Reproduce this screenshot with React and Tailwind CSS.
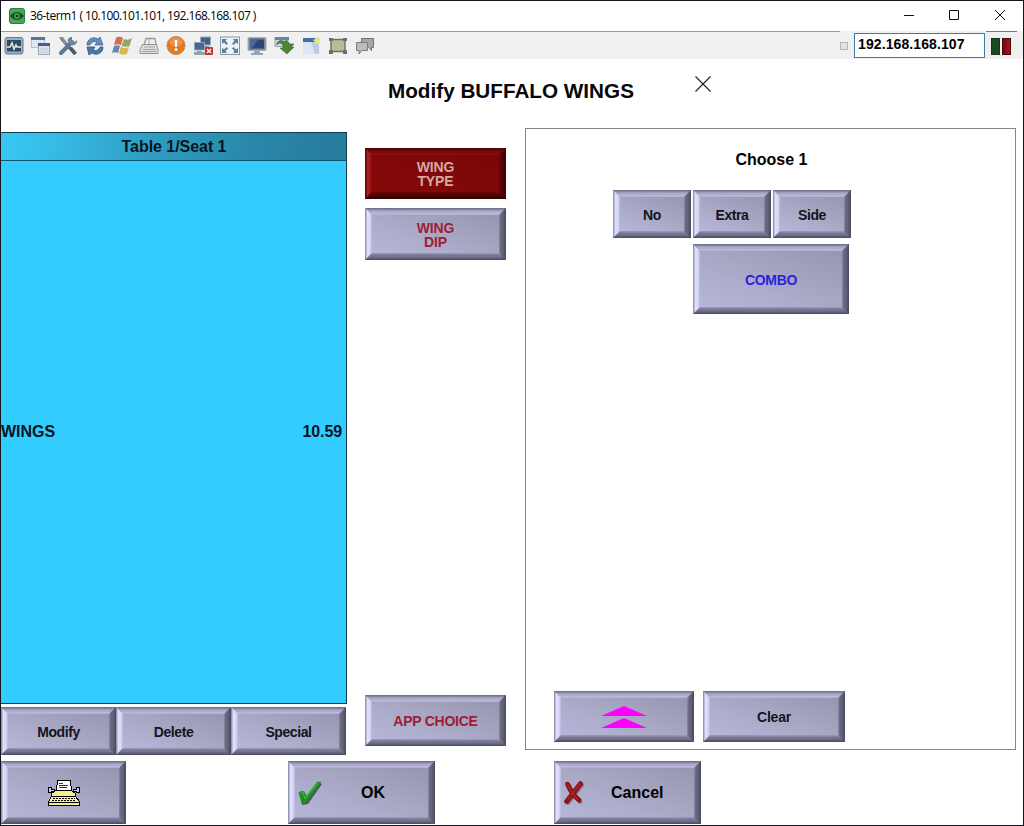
import React from "react";

const TONES = {
  steel: {
    layers: [
      "border border-t-[#72728a] border-l-[#9494b2] border-r-[#4e4e62] border-b-[#505064]",
      "border border-t-[#8686a2] border-l-[#bcbcdc] border-r-[#555569] border-b-[#5c5c74]",
      "border border-t-[#9a9aba] border-l-[#dedefa] border-r-[#5c5c72] border-b-[#686882]",
      "border-2 border-t-[#acaccc] border-l-[#dcdcf8] border-r-[#64647a] border-b-[#757590]",
      "border border-t-[#b8b8da] border-l-[#ccccec] border-r-[#6e6e86] border-b-[#8484a2]",
      "border border-t-[#b2b2d2] border-l-[#bebee0] border-r-[#80809a] border-b-[#9494b4]",
    ],
    face: "bg-linear-[20deg,#b6b6da_0%,#a8a8c5_50%,#9696b0_100%]",
  },
  red: {
    layers: [
      "border border-t-[#520303] border-l-[#6c0606] border-r-[#3a0202] border-b-[#340202]",
      "border border-t-[#5e0505] border-l-[#860c0c] border-r-[#420303] border-b-[#3c0303]",
      "border border-t-[#6c0606] border-l-[#a82020] border-r-[#4a0303] border-b-[#440303]",
      "border-2 border-t-[#7a0909] border-l-[#a41c1c] border-r-[#520404] border-b-[#4e0404]",
      "border border-t-[#8a0d0d] border-l-[#961212] border-r-[#5c0505] border-b-[#5c0505]",
      "border border-t-[#880b0b] border-l-[#8c0c0c] border-r-[#6a0606] border-b-[#6c0606]",
    ],
    face: "bg-linear-[20deg,#860909_0%,#800808_50%,#780707_100%]",
  },
};

function Key({ size, tone = "steel", children }) {
  const t = TONES[tone];
  const face = (
    <span className={`flex h-full w-full items-center justify-center whitespace-nowrap ${t.face}`}>{children}</span>
  );
  const [rim, ...inner] = t.layers;
  const body = inner.reduceRight(
    (child, layer) => <span className={`flex h-full w-full ${layer}`}>{child}</span>,
    face
  );
  return <button className={`flex shrink-0 ${rim} ${size}`}>{body}</button>;
}

function Label({ className = "tracking-[-0.4px]", children }) {
  return <span className={`pt-px text-center text-[14px] leading-[14px] font-bold ${className}`}>{children}</span>;
}

function Ico({ children }) {
  return (
    <svg width="20" height="20" viewBox="0 0 20 20" className="shrink-0">
      {children}
    </svg>
  );
}

function Toolbar() {
  return (
    <div className="flex items-center gap-[7px] pt-px pl-[3px]">
      <Ico>
        <rect x="1" y="1.500" width="18" height="16.500" rx="2" fill="#9fb0bf" stroke="#66798a" />
        <rect x="3" y="4" width="14" height="11.500" fill="#2a4d6e" />
        <path d="M3 11h3l2-4 2 6 2-4 1 2h4" fill="none" stroke="#eef1dc" strokeWidth="1.500" />
      </Ico>
      <Ico>
        <rect x="0.5" y="1.500" width="13" height="10" fill="#e1e6ed" stroke="#b5c0ca" />
        <path d="M0 1h14v3H0z" fill="#54759f" />
        <rect x="7.500" y="7.500" width="11" height="11" fill="#dce2ea" stroke="#98a5b2" />
        <path d="M7 7h12v3H7z" fill="#3d6194" />
        <path d="M9 13h8M9 16h8" stroke="#bcc7d2" />
      </Ico>
      <Ico>
        <path d="M3 2l6 7 8 9" stroke="#59636e" strokeWidth="3" fill="none" />
        <path d="M14 6L3 17" stroke="#5d7893" strokeWidth="4" strokeLinecap="round" />
        <path d="M14 1l0 4 3 1 2-2c1 3-2 6-6 5l-3-3c-1-3 1-5 4-5z" fill="#6d849c" />
        <path d="M1 1l4 0 4 6-2 2z" fill="#858d95" />
        <path d="M11 12l3-1 5 6-3 2z" fill="#4a5765" />
      </Ico>
      <Ico>
        <path d="M2 9C2 3 8 0 13 3l2-2 3 8h-8l2-3C9 5 6 6 5 9z" fill="#6390bb" stroke="#3c6791" strokeWidth=".8" />
        <path d="M18 11c0 6-6 9-11 6l-3 2-2-8h8l-2 3c3 1 6 0 7-3z" fill="#4a78a8" stroke="#2f5680" strokeWidth=".8" />
      </Ico>
      <Ico>
        <path d="M4 2c2-2 5-1 7 0L9 9C6 8 4 8 2 9z" fill="#cf6f4e" />
        <path d="M12 3c3 1 5 1 8-1l-2.500 8c-3 1-5 1-8 0z" fill="#8bab62" />
        <path d="M2 10c2-1 4-1 6 0l-2 7c-2-1-4-1-6 0z" fill="#6585b5" />
        <path d="M9 10.500c3 2 5 2 8 0l-2 7.500c-3 1-6 1-8-1z" fill="#dab650" />
      </Ico>
      <Ico>
        <path d="M5 9l2-6.500h9l1 6" fill="#ececec" stroke="#9a9a9a" strokeWidth="1.300" />
        <path d="M10 3v5" stroke="#aaa" />
        <path d="M3.500 8.500h14l1.500 5v4H1v-4z" fill="#dedede" stroke="#929292" />
        <path d="M5 11h11M4 13.500h13M3 15.500h14" stroke="#a6a6a6" />
      </Ico>
      <Ico>
        <circle cx="10" cy="9.500" r="9.200" fill="#e27a24" stroke="#c09873" strokeWidth=".8" />
        <ellipse cx="10" cy="6" rx="6.500" ry="4.500" fill="#f0a05c" opacity=".6" />
        <path d="M8.600 4h2.800l-.5 7H9.100z" fill="#fff" />
        <circle cx="10" cy="13.500" r="1.500" fill="#fff" />
      </Ico>
      <Ico>
        <rect x="7.500" y="1" width="10" height="8" fill="#40618c" stroke="#9eabb7" />
        <path d="M10 10h6v2h-6z" fill="#8897a5" />
        <rect x="1.500" y="6.500" width="10" height="7.500" fill="#45689a" stroke="#97a4b1" />
        <path d="M4 15h5v1h4v3H1v-3h3z" fill="#96a2ad" />
        <rect x="12" y="11" width="8" height="8" rx="1" fill="#c5302c" />
        <path d="M14 13l4 4m0-4l-4 4" stroke="#fff" strokeWidth="1.400" />
      </Ico>
      <Ico>
        <rect x=".5" y="1" width="19" height="17.500" fill="#eef2f4" stroke="#8497a4" />
        <path d="M2 3h5L5.500 5 8 7.500 6.500 9 4 6.500 2 8zM18 3h-5l1.500 2L12 7.500 13.500 9 16 6.500 18 8zM2 17h5l-1.500-2L8 12.500 6.500 11 4 13.500 2 12zM18 17h-5l1.500-2-2.500-2.500 1.500-1.500 2.500 2.500 2-1.500z" fill="#5d7c96" />
      </Ico>
      <Ico>
        <rect x="1" y="1.500" width="18" height="13" rx="1" fill="#7f8894" stroke="#a7afb5" />
        <rect x="3" y="3.500" width="14" height="9" fill="#2b457a" />
        <path d="M3 3.500h8l-6 9H3z" fill="#4e6792" />
        <path d="M7 15h6v2h3v2H4v-2h3z" fill="#9ba3aa" />
      </Ico>
      <Ico>
        <rect x="1" y="1.500" width="13" height="9" fill="#cfd9e3" stroke="#94a3af" />
        <path d="M1 1h14v3H1z" fill="#6b83a3" />
        <path d="M3 7c2-3 5-3 8-1l1-2 4 4h4l-3 3h3l-7 7-7-6h3V9C7 7 5 6 3 9z" fill="#4b8538" stroke="#35662b" strokeWidth=".6" />
      </Ico>
      <Ico>
        <path d="M2 2h16v16H2z" fill="#b9cde2" />
        <path d="M2 2h13v4H2z" fill="#456da4" />
        <path d="M2 6h8l4 12H2z" fill="#dde7f1" />
        <path d="M16 0l1 3 3 0-2 2 2 3-4-1-2 2 0-3-2-2 2-1z" fill="#f0e47a" />
      </Ico>
      <Ico>
        <path d="M3 3.500h14v12H3z" fill="#b9bb98" stroke="#6d7061" strokeWidth="1.400" />
        <path d="M1 2h4v3H1zM15 2h4v3h-4zM1 14h4v4H1zM15 14h4v4h-4z" fill="#6c6e68" />
      </Ico>
      <Ico>
        <path d="M6.500 2.500h12v9h-2v3l-3-3h-7z" fill="#a6a6a6" stroke="#737373" />
        <path d="M1.500 6.500h11v8H7l-3 3.500v-3.500H1.500z" fill="#bcbcbc" stroke="#7b7b7b" />
      </Ico>
    </div>
  );
}

function TitleBar() {
  return (
    <div className="flex h-[30px] shrink-0 items-center bg-white pl-2">
      <svg width="16" height="16" viewBox="0 0 16 16" className="mb-px shrink-0">
        <rect x=".5" y=".5" width="15" height="15" rx="2" fill="#45a653" stroke="#2b8039" />
        <path d="M1 8q7-8 14 0-7 8-14 0z" fill="#1a4f25" />
        <circle cx="8" cy="8" r="2.700" fill="#4fae61" />
        <circle cx="8" cy="8" r="1.300" fill="#0d2412" />
      </svg>
      <span className="ml-[5px] font-['Open_Sans','Noto_Sans',sans-serif] text-[12px] tracking-[-0.57px] whitespace-nowrap text-black">
        36-term1 ( 10.100.101.101, 192.168.168.107 )
      </span>
      <svg width="102" height="12" viewBox="0 0 102 12" className="mr-[17px] mb-[2px] ml-auto shrink-0" fill="none" stroke="#111">
        <path d="M0 6.500h10M45.500 1.500h9v9h-9zM91 1l10 10M101 1L91 11" />
      </svg>
    </div>
  );
}

function Typewriter() {
  return (
    <svg width="34" height="28" viewBox="0 0 34 28" shapeRendering="crispEdges">
      <path d="M1.500 8.500h3v2h3v2h-3v1h-3zM32.500 8.500h-3v2h-3v2h3v1h3z" fill="#c8c8f0" stroke="#000" />
      <path d="M4.500 18.500v-4l4-3h16l4 3v4z" fill="#f3ee90" stroke="#000" />
      <path d="M10.500 1.500h13l1 10h-15z" fill="#fff" stroke="#000" />
      <path d="M12 4.500h4M12 6.500h9M12 8.500h8" stroke="#2525b5" />
      <path d="M4.500 17.500h24l4 5v4h-31v-4z" fill="#f3ee90" stroke="#000" />
      <path d="M6 19.500h22M5 21.500h24" stroke="#000" strokeDasharray="2 1" />
      <path d="M2 23.500h30" stroke="#000" />
    </svg>
  );
}

function OrderList() {
  return (
    <div className="flex w-[346px] shrink-0 flex-col pt-[4px]">
      <div className="flex h-[572px] flex-col border-t border-r border-b border-[#123c50] bg-[#33ccff] text-[16px] font-bold text-[#08141c]">
        <div className="flex h-[28px] shrink-0 items-center justify-center border-b border-[#12526a] bg-linear-[100deg,#38c8f5_0%,#36bce6_15%,#2f9cc0_45%,#2986a8_75%,#277a9a_100%]">
          <span className="pl-px tracking-[-0.05px]">Table 1/Seat 1</span>
        </div>
        <div className="flex flex-1 items-center justify-between pr-[4px]">
          <span>WINGS</span>
          <span className="tracking-[-0.1px]">10.59</span>
        </div>
      </div>
      <div className="mt-[3px] flex">
        <Key size="h-[48px] w-[115px]"><Label>Modify</Label></Key>
        <Key size="h-[48px] w-[115px]"><Label>Delete</Label></Key>
        <Key size="h-[48px] w-[115px]"><Label>Special</Label></Key>
      </div>
    </div>
  );
}

function ChoicePanel() {
  return (
    <div className="ml-[19px] flex h-[622px] w-[491px] shrink-0 flex-col border border-[#858585]">
      <div className="flex h-[61px] items-center justify-center pl-[2px] text-[16px] font-bold text-black">Choose 1</div>
      <div className="flex gap-[2px] pl-[87px]">
        <Key size="h-[48px] w-[78px]"><Label>No</Label></Key>
        <Key size="h-[48px] w-[78px]"><Label>Extra</Label></Key>
        <Key size="h-[48px] w-[78px]"><Label>Side</Label></Key>
      </div>
      <div className="mt-[6px] pl-[167px]">
        <Key size="h-[70px] w-[156px]">
          <Label className="tracking-[-0.35px] text-[#2a22e0]">COMBO</Label>
        </Key>
      </div>
      <div className="mt-auto mb-[7px] flex gap-[9px] pl-[28px]">
        <Key size="h-[51px] w-[140px]">
          <svg width="46" height="22" viewBox="0 0 46 22" fill="#ff00ff">
            <path d="M0 10L23 0l23 10zM0 22l23-10 23 10z" />
          </svg>
        </Key>
        <Key size="h-[51px] w-[142px]"><Label className="tracking-[-0.2px]">Clear</Label></Key>
      </div>
    </div>
  );
}

export default function App() {
  return (
    <div className="flex h-[826px] w-[1024px] flex-col overflow-hidden border border-[#15151c] bg-white font-['Liberation_Sans',Arial,sans-serif] text-[#14141c]">
      <TitleBar />
      <div className="flex h-[28px] shrink-0 bg-[#f0f0f0]">
        <div className="flex w-[839px] shrink-0 items-center border-t border-[#9a9a9a]">
          <Toolbar />
        </div>
        <div className="mt-[11px] h-[8px] w-[8px] shrink-0 border border-[#b5b5b5] bg-[#e2e2e2]" />
        <div className="mt-[2px] ml-[6px] flex h-[25px] w-[131px] shrink-0 items-center border border-[#3f7ba8] bg-white pb-[2px] pl-[3px] text-[14px] font-bold tracking-[0.1px] text-black">
          192.168.168.107
        </div>
        <div className="ml-px flex h-[28px] w-[31px] items-center gap-[2px] border-t border-[#777] pt-px pl-[5px]">
          <div className="h-[17px] w-[9px] border border-[#17351a] bg-[#1c4a20]" />
          <div className="h-[17px] w-[9px] border border-[#4a0a0d] bg-linear-to-r from-[#6a0a10] to-[#b01020]" />
        </div>
      </div>
      <div className="flex h-[69px] shrink-0 pl-[387px]">
        <h1 className="w-[307px] pt-[17px] text-[20.7px] leading-[30px] font-bold whitespace-nowrap text-[#080808]">
          Modify BUFFALO WINGS
        </h1>
        <svg width="16" height="16" viewBox="0 0 16 16" className="mt-[17px]" fill="none" stroke="#222" strokeWidth="1.200">
          <path d="M.5.500l15 15M15.500.500l-15 15" />
        </svg>
      </div>
      <div className="flex h-[627px] shrink-0">
        <OrderList />
        <div className="ml-[18px] flex h-[618px] w-[141px] shrink-0 flex-col gap-[9px] pt-[20px]">
          <Key tone="red" size="h-[51px] w-[141px]">
            <Label className="tracking-[-0.1px] text-[#d3a9a4]">WING<br />TYPE</Label>
          </Key>
          <Key size="h-[52px] w-[141px]">
            <Label className="tracking-[-0.1px] text-[#a01c36]">WING<br />DIP</Label>
          </Key>
          <div className="mt-auto">
            <Key size="h-[51px] w-[141px]">
              <Label className="tracking-[-0.25px] text-[#a01c36]">APP CHOICE</Label>
            </Key>
          </div>
        </div>
        <ChoicePanel />
      </div>
      <div className="flex pt-[6px] text-[16px] font-bold text-black">
        <Key size="h-[63px] w-[125px]"><Typewriter /></Key>
        <div className="ml-[162px]">
          <Key size="h-[63px] w-[147px]">
            <span className="flex w-full items-center pl-[2px]">
              <svg width="26" height="26" viewBox="0 0 26 26">
                <path d="M3 14l5-1 2 4L22 3l3 1-14 20-6 1z" fill="#55506e" />
                <path d="M1.500 12.500q3-2.500 6-1l1.500 4.500L20.500 1.500l4 .5L9.500 22.500l-4.500 1.500z" fill="#17931d" />
                <path d="M3 13.500l3-1 2 6L21 3" fill="none" stroke="#3cb53f" strokeWidth="1.200" />
              </svg>
              <span className="ml-[38px]">OK</span>
            </span>
          </Key>
        </div>
        <div className="ml-[119px]">
          <Key size="h-[63px] w-[147px]">
            <span className="flex w-full items-center pl-[2px]">
              <svg width="22" height="24" viewBox="0 0 22 24" fill="none" strokeLinecap="round">
                <path d="M6 4.500q3 8 11 16M18.500 4L5 21.500" stroke="#5b4658" strokeWidth="4.500" opacity=".7" />
                <path d="M4.500 3q3 9 11.500 16M17.500 2.500L3.500 20.500" stroke="#8e1014" strokeWidth="4.600" />
                <path d="M4.500 3q3 8 10 15M17 3L5 18" stroke="#b5262a" strokeWidth="1.400" />
              </svg>
              <span className="ml-[26px]">Cancel</span>
            </span>
          </Key>
        </div>
      </div>
    </div>
  );
}
